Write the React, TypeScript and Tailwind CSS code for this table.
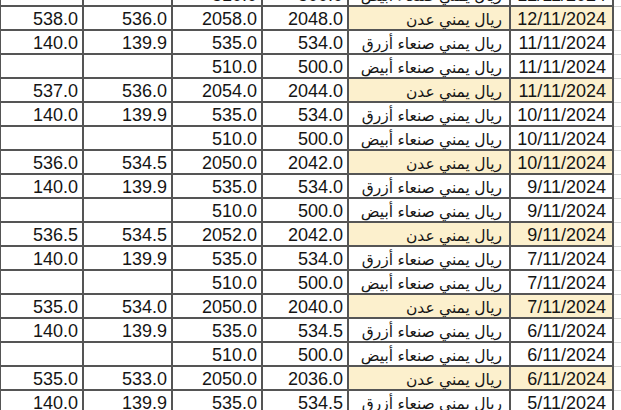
const ADEN = "ريال يمني عدن";
const BLUE = "ريال يمني صنعاء أزرق";
const WHITE = "ريال يمني صنعاء أبيض";

type Row = [string, string, string, string, string, string];

const rows: Row[] = [
  ["", "", "510.0", "500.0", WHITE, "12/11/2024"],
  ["538.0", "536.0", "2058.0", "2048.0", ADEN, "12/11/2024"],
  ["140.0", "139.9", "535.0", "534.0", BLUE, "11/11/2024"],
  ["", "", "510.0", "500.0", WHITE, "11/11/2024"],
  ["537.0", "536.0", "2054.0", "2044.0", ADEN, "11/11/2024"],
  ["140.0", "139.9", "535.0", "534.0", BLUE, "10/11/2024"],
  ["", "", "510.0", "500.0", WHITE, "10/11/2024"],
  ["536.0", "534.5", "2050.0", "2042.0", ADEN, "10/11/2024"],
  ["140.0", "139.9", "535.0", "534.0", BLUE, "9/11/2024"],
  ["", "", "510.0", "500.0", WHITE, "9/11/2024"],
  ["536.5", "534.5", "2052.0", "2042.0", ADEN, "9/11/2024"],
  ["140.0", "139.9", "535.0", "534.0", BLUE, "7/11/2024"],
  ["", "", "510.0", "500.0", WHITE, "7/11/2024"],
  ["535.0", "534.0", "2050.0", "2040.0", ADEN, "7/11/2024"],
  ["140.0", "139.9", "535.0", "534.5", BLUE, "6/11/2024"],
  ["", "", "510.0", "500.0", WHITE, "6/11/2024"],
  ["535.0", "533.0", "2050.0", "2036.0", ADEN, "6/11/2024"],
  ["140.0", "139.9", "535.0", "534.5", BLUE, "5/11/2024"],
];

const cell = "border-b-2 border-r-2 border-[#555555] text-right overflow-hidden whitespace-nowrap pt-[3px] leading-[19px]";

export default function App() {
  return (
    <div className="w-[621px] h-[410px] overflow-hidden bg-white text-[#151515] text-[18px] font-['Liberation_Sans','DejaVu_Sans',Arial,sans-serif]">
      <div className="-mt-[17px]">
        {rows.map((r, i) => {
          const aden = r[4] === ADEN;
          const hl = aden ? "bg-[#fcf0cd]" : "bg-white";
          return (
            <div key={i} className="grid grid-cols-[84px_89px_90px_86px_162px_103px_1fr] h-[24px]">
              <div className={`${cell} border-l-[1px] pr-[4px]`}>{r[0]}</div>
              <div className={`${cell} pr-[4px]`}>{r[1]}</div>
              <div className={`${cell} pr-[4px]`}>{r[2]}</div>
              <div className={`${cell} pr-[4px]`}>{r[3]}</div>
              <div dir="rtl" className={`${cell} ${hl} text-start pr-[7px] text-[15.5px] pt-[2px] leading-[20px]`}>{r[4]}</div>
              <div className={`${cell} ${hl} pr-[6px]`}>{r[5]}</div>
              <div className="border-b border-[#d4d4d4]" />
            </div>
          );
        })}
      </div>
    </div>
  );
}
